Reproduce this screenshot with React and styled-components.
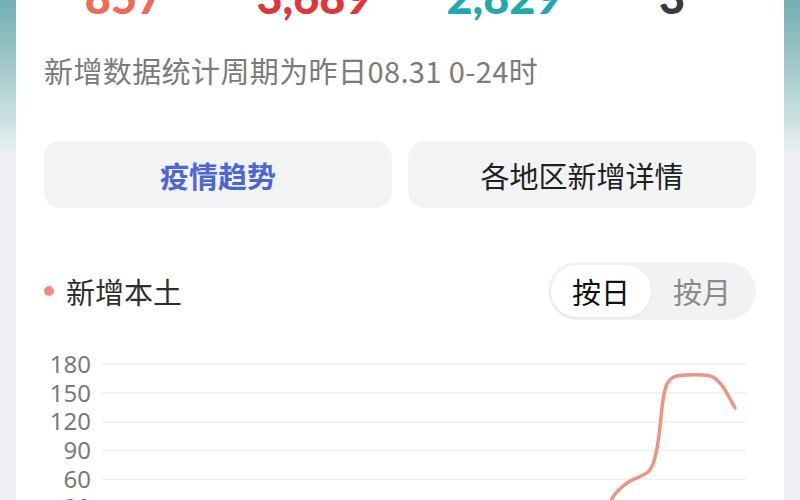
import React from 'react'
import styled, { createGlobalStyle } from 'styled-components'

const GlobalStyle = createGlobalStyle`
  html, body {
    margin: 0;
    padding: 0;
    height: 100%;
    overflow: hidden;
  }
  body {
    background: linear-gradient(
      180deg,
      #72adb1 0px,
      #a5cacc 70px,
      #d3e4e5 128px,
      #e6eeef 148px,
      #eef0f3 152px,
      #eef0f3 100%
    );
    font-family: 'Noto Sans CJK SC', 'Noto Sans', sans-serif;
  }
`

const Page = styled.div`
  padding: 0 16px;
`

const Card = styled.div`
  background: #fff;
  margin-top: -25px;
  padding: 0 28px 40px;
  min-height: 600px;
`

const Stats = styled.div`
  display: grid;
  grid-template-columns: 190px 190px 190px 146px;
  margin-left: -15px;
`

const StatValue = styled.div`
  font-family: Lato, 'Open Sans', sans-serif;
  font-weight: 900;
  font-size: 45px;
  line-height: 1;
  height: 44px;
  text-align: center;
  color: ${props => props.color};
`

const Note = styled.div`
  margin-top: 33px;
  font-size: 29px;
  letter-spacing: 0.4px;
  line-height: 36px;
  color: #7b7b7b;
`

const Tabs = styled.div`
  display: grid;
  grid-template-columns: 1fr 1fr;
  gap: 16px;
  margin-top: 53px;
`

const Tab = styled.div`
  height: 67px;
  border-radius: 16px;
  background: #f2f3f5;
  display: flex;
  align-items: center;
  justify-content: center;
  font-size: 29px;
  font-weight: ${props => (props.active ? 700 : 400)};
  color: ${props => (props.active ? '#4d66d6' : '#1f1f1f')};
`

const SectionHead = styled.div`
  display: flex;
  align-items: center;
  justify-content: space-between;
  margin-top: 54px;
`

const SectionTitle = styled.div`
  display: flex;
  align-items: center;
  gap: 12px;
  font-size: 29px;
  color: #2e2e2e;
`

const Dot = styled.span`
  width: 10px;
  height: 10px;
  border-radius: 50%;
  background: #f28b82;
`

const Toggle = styled.div`
  display: flex;
  padding: 3px;
  border-radius: 29px;
  background: #f1f2f4;
`

const ToggleItem = styled.div`
  width: ${props => (props.active ? '100px' : '102px')};
  height: 52px;
  border-radius: 26px;
  display: flex;
  align-items: center;
  justify-content: center;
  font-size: 29px;
  color: ${props => (props.active ? '#111' : '#8a8a8a')};
  background: ${props => (props.active ? '#fff' : 'transparent')};
  box-shadow: ${props => (props.active ? '0 1px 3px rgba(0,0,0,0.06)' : 'none')};
`

const Chart = styled.div`
  display: flex;
  gap: 11px;
  margin-top: 30px;
`

const YAxis = styled.div`
  width: 47px;
  display: flex;
  flex-direction: column;
  align-items: flex-end;
`

const YLabel = styled.div`
  font-family: 'Noto Sans', sans-serif;
  font-size: 24px;
  line-height: 28.7px;
  height: 28.7px;
  color: #7a7a7a;
`

const Plot = styled.svg`
  flex: 0 0 644px;
  width: 644px;
  height: 200px;
  display: block;
`

const stats = [
  { value: '857', color: '#ee6a55' },
  { value: '3,689', color: '#e0353a' },
  { value: '2,829', color: '#1fa9ad' },
  { value: '3', color: '#3a3a3a' },
]

const ticks = [180, 150, 120, 90, 60, 30, 0]

// points in plot coordinates, traced from the daily series
const points = [
  [440, 215], [480, 200], [500, 172], [511, 147], [525, 133], [537, 127],
  [546, 122], [551, 114], [555, 98], [558, 77], [561, 50], [565, 34],
  [572, 27], [585, 25], [601, 25], [611, 27], [621, 37], [633, 58],
]

const smoothPath = pts => {
  let d = `M${pts[0][0]},${pts[0][1]}`
  for (let i = 0; i < pts.length - 1; i++) {
    const p0 = pts[i - 1] || pts[i]
    const p1 = pts[i]
    const p2 = pts[i + 1]
    const p3 = pts[i + 2] || p2
    const c1x = p1[0] + (p2[0] - p0[0]) / 6
    const c1y = p1[1] + (p2[1] - p0[1]) / 6
    const c2x = p2[0] - (p3[0] - p1[0]) / 6
    const c2y = p2[1] - (p3[1] - p1[1]) / 6
    d += ` C${c1x},${c1y} ${c2x},${c2y} ${p2[0]},${p2[1]}`
  }
  return d
}

export default function App() {
  return (
    <Page>
      <GlobalStyle />
      <Card>
        <Stats>
          {stats.map(s => (
            <StatValue key={s.value} color={s.color}>
              {s.value}
            </StatValue>
          ))}
        </Stats>
        <Note>新增数据统计周期为昨日08.31 0-24时</Note>
        <Tabs>
          <Tab active>疫情趋势</Tab>
          <Tab>各地区新增详情</Tab>
        </Tabs>
        <SectionHead>
          <SectionTitle>
            <Dot />
            新增本土
          </SectionTitle>
          <Toggle>
            <ToggleItem active>按日</ToggleItem>
            <ToggleItem>按月</ToggleItem>
          </Toggle>
        </SectionHead>
        <Chart>
          <YAxis>
            {ticks.map(t => (
              <YLabel key={t}>{t}</YLabel>
            ))}
          </YAxis>
          <Plot viewBox="0 0 644 200">
            {ticks.map((t, i) => (
              <line
                key={t}
                x1="0"
                x2="644"
                y1={14.35 + i * 28.7}
                y2={14.35 + i * 28.7}
                stroke="#f0f0f2"
                strokeWidth="1.5"
              />
            ))}
            <path
              d={smoothPath(points)}
              fill="none"
              stroke="#ec9585"
              strokeWidth="3.5"
              strokeLinecap="round"
              strokeLinejoin="round"
            />
          </Plot>
        </Chart>
      </Card>
    </Page>
  )
}
